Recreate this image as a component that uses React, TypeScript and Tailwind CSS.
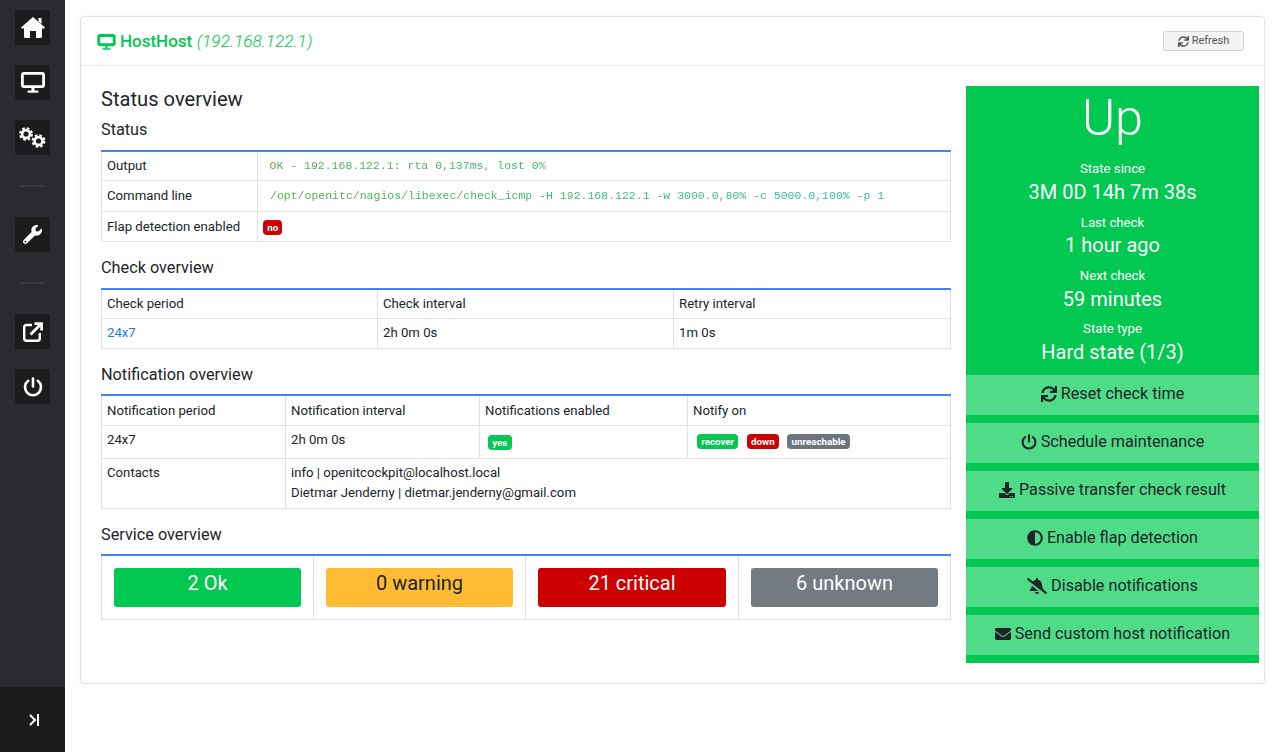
import React from "react";
import { FaWrench, FaSync, FaDownload, FaAdjust, FaBellSlash, FaEnvelope } from "react-icons/fa";

const HomeIcon = () => (
  <svg width="24" height="21" viewBox="0 0 24 21" fill="currentColor">
    <path d="M12 0 L24 10.5 Q24 11.5 23 11.5 H21 V19.5 Q21 21 19.5 21 H15 V14 H9 V21 H4.5 Q3 21 3 19.5 V11.5 H1 Q0 11.5 0 10.5 Z" />
    <path d="M17.5 1 H20.5 V7 L17.5 4.5 Z" />
  </svg>
);

const DesktopIcon = ({ width, height, stroke = 2.8 }: { width: number; height: number; stroke?: number }) => (
  <svg width={width} height={height} viewBox="0 0 24 21" fill="currentColor">
    <rect x={stroke / 2} y={stroke / 2} width={24 - stroke} height={16 - stroke} rx="1.6" fill="none" stroke="currentColor" strokeWidth={stroke} />
    <rect x="10.5" y="16" width="3" height="3" />
    <rect x="6.5" y="18.6" width="11" height="2.2" rx="0.8" />
  </svg>
);

const CogsIcon = () => (
  <svg width="27" height="21" viewBox="0 0 27 21" fill="none" stroke="currentColor">
    <circle cx="7" cy="7" r="3.9" strokeWidth="2.6" />
    <circle cx="7" cy="7" r="5.7" strokeWidth="2.4" strokeDasharray="2.5 2" />
    <circle cx="19.5" cy="14" r="3.9" strokeWidth="2.6" />
    <circle cx="19.5" cy="14" r="5.7" strokeWidth="2.4" strokeDasharray="2.5 2" />
  </svg>
);

const ExternalIcon = () => (
  <svg width="20" height="20" viewBox="0 0 20 20" fill="none" stroke="currentColor" strokeWidth="2.4">
    <path d="M9 3 H3.5 Q1.2 3 1.2 5.3 V16.2 Q1.2 18.8 3.5 18.8 H14.5 Q16.8 18.8 16.8 16.2 V11" />
    <path d="M7.5 12.5 L18 2" strokeWidth="2.8" />
    <path d="M11.5 1.6 H18.6 V8.5" strokeWidth="2.6" />
  </svg>
);

const PowerIcon = ({ size }: { size: number }) => (
  <svg width={size} height={size} viewBox="0 0 20 20" fill="none" stroke="currentColor" strokeWidth="2.6" strokeLinecap="round">
    <path d="M10 1.5 V9.5" />
    <path d="M5.2 3.8 A8 8 0 1 0 14.8 3.8" />
  </svg>
);

const IconBtn = ({ children }: { children: React.ReactNode }) => (
  <div className="w-[35px] h-[35px] rounded-[2px] bg-[#1c1c1f] flex items-center justify-center text-white">{children}</div>
);

const Cell = ({ className = "", colSpan, children }: { className?: string; colSpan?: number; children?: React.ReactNode }) => (
  <td colSpan={colSpan} className={"border border-[#dee2e6] pl-[5px] pr-[5px] align-top py-[4.5px] leading-[19.8px] " + className}>{children}</td>
);

const Badge = ({ color, children }: { color: string; children: React.ReactNode }) => (
  <span className={"inline-block align-middle rounded-[4px] text-white font-bold text-[9.75px] leading-[15px] px-[4.2px] " + color}>{children}</span>
);

const H5 = ({ className = "", children }: { className?: string; children: React.ReactNode }) => (
  <h5 className={"text-[16.25px] leading-[19.5px] text-[#212529] " + className}>{children}</h5>
);

const Action = ({ icon, children }: { icon: React.ReactNode; children: React.ReactNode }) => (
  <div className="h-[40px] bg-[#50db88] flex items-center justify-center gap-[4px] text-[16.2px] text-[#212529] pb-[1px]">
    {icon}
    <span>{children}</span>
  </div>
);

const Stat = ({ label, value }: { label: string; value: string }) => (
  <div className="text-center text-white">
    <div className="text-[13.2px] leading-[20px]">{label}</div>
    <div className="text-[20px] leading-[24px] mt-[0.6px]">{value}</div>
  </div>
);

const Tile = ({ color, text, children }: { color: string; text: string; children: React.ReactNode }) => (
  <td className="border border-[#dee2e6] px-[12.25px] pt-[12px] pb-[12px]">
    <div className={"h-[39px] rounded-[3px] text-center text-[20px] leading-[30px] " + color + " " + text}>{children}</div>
  </td>
);

const mono = { fontFamily: "'Liberation Mono', monospace" };

export default function App() {
  return (
    <div className="flex h-[752px] bg-white text-[13.2px] text-[#212529] overflow-hidden" style={{ fontFamily: "Roboto, sans-serif" }}>
      <aside className="w-[65px] shrink-0 flex flex-col bg-[#2a2a2f]">
        <div className="flex-1 flex flex-col items-center pt-[10px]">
          <IconBtn><HomeIcon /></IconBtn>
          <div className="h-[20px]" />
          <IconBtn><DesktopIcon width={24} height={21} /></IconBtn>
          <div className="h-[20px]" />
          <IconBtn><CogsIcon /></IconBtn>
          <div className="w-[25px] h-[2px] bg-[#38383d] mt-[30px] mb-[30px]" />
          <IconBtn><FaWrench size={19} /></IconBtn>
          <div className="w-[25px] h-[2px] bg-[#38383d] mt-[30px] mb-[30px]" />
          <IconBtn><ExternalIcon /></IconBtn>
          <div className="h-[20px]" />
          <IconBtn><PowerIcon size={20} /></IconBtn>
        </div>
        <div className="h-[65px] bg-[#1c1c1f] flex items-center justify-center text-white">
          <svg width="10" height="12" viewBox="0 0 10 12" className="ml-[3px]">
            <path d="M1 1l5 5-5 5" fill="none" stroke="currentColor" strokeWidth="2" />
            <rect x="8" y="0" width="2" height="12" fill="currentColor" />
          </svg>
        </div>
      </aside>
      <main className="flex-1 pl-[15px] pr-[15px] pt-[16px]">
        <div className="h-[668px] bg-white border border-[#dee2e6] rounded-[4px] shadow-[0_0_13px_rgba(0,0,0,0.04)]">
          <header className="h-[49px] border-b border-[#e9ebee] flex items-center justify-between pl-[16px] pr-[20px]">
            <div className="flex items-center text-[#00c851] text-[17px] pt-[1px]">
              <span className="mr-[4px] flex"><DesktopIcon width={19} height={16} stroke={3.8} /></span>
              <span className="font-medium">HostHost</span>
              <span className="ml-[4.5px] italic font-light text-[17.25px]">(192.168.122.1)</span>
            </div>
            <div className="w-[81px] h-[20px] rounded-[3px] border border-[#d4d4d4] bg-[#f4f4f4] flex items-center justify-center gap-[3px] text-[11px] text-[#555]">
              <FaSync size={11} />
              <span>Refresh</span>
            </div>
          </header>
          <div className="flex pt-[20px] pl-[20px] pr-[5px]">
            <div className="w-[850px] pt-[3px]">
              <h4 className="text-[20.15px] leading-[21px]">Status overview</h4>
              <H5 className="mt-[10px]">Status</H5>
              <table className="w-full mt-[10px] border-t-[2px] border-t-[#4285f4] border-collapse table-fixed">
                <colgroup><col className="w-[156px]" /><col /></colgroup>
                <tbody>
                  <tr className="h-[30px]"><Cell>Output</Cell><Cell className="pl-[11.5px]"><code className="block pt-[1px] leading-[18.8px] text-[11.5px] bg-linear-to-r from-[#4cae3c] to-[#1db9aa] bg-clip-text text-transparent" style={mono}>OK - 192.168.122.1: rta 0,137ms, lost 0%</code></Cell></tr>
                  <tr className="h-[31px]"><Cell>Command line</Cell><Cell className="pl-[12px]"><code className="block pt-[1px] leading-[18.8px] text-[11.5px] bg-linear-to-r from-[#4cae3c] to-[#1db9aa] bg-clip-text text-transparent" style={mono}>/opt/openitc/nagios/libexec/check_icmp -H 192.168.122.1 -w 3000.0,80% -c 5000.0,100% -p 1</code></Cell></tr>
                  <tr className="h-[30px]"><Cell>Flap detection enabled</Cell><Cell className="!align-middle !py-0"><Badge color="bg-[#cc0000]">no</Badge></Cell></tr>
                </tbody>
              </table>
              <H5 className="mt-[16px]">Check overview</H5>
              <table className="w-full mt-[10px] border-t-[2px] border-t-[#4285f4] border-collapse table-fixed">
                <colgroup><col className="w-[276px]" /><col className="w-[296px]" /><col /></colgroup>
                <tbody>
                  <tr className="h-[29px]"><Cell className="!py-[4px]">Check period</Cell><Cell className="!py-[4px]">Check interval</Cell><Cell className="!py-[4px]">Retry interval</Cell></tr>
                  <tr className="h-[30px]"><Cell className="text-[#1e7be0]">24x7</Cell><Cell>2h 0m 0s</Cell><Cell>1m 0s</Cell></tr>
                </tbody>
              </table>
              <H5 className="mt-[16px]">Notification overview</H5>
              <table className="w-full mt-[10px] border-t-[2px] border-t-[#4285f4] border-collapse table-fixed">
                <colgroup><col className="w-[184px]" /><col className="w-[194px]" /><col className="w-[208px]" /><col /></colgroup>
                <tbody>
                  <tr className="h-[30px]"><Cell>Notification period</Cell><Cell>Notification interval</Cell><Cell>Notifications enabled</Cell><Cell>Notify on</Cell></tr>
                  <tr className="h-[33px]"><Cell>24x7</Cell><Cell>2h 0m 0s</Cell>
                    <Cell className="!pl-[8px] !align-middle !py-0"><Badge color="bg-[#00c851]">yes</Badge></Cell>
                    <Cell className="!pl-[9px] !align-middle !py-0"><span className="flex gap-[8.5px]"><Badge color="bg-[#00c851]">recover</Badge><Badge color="bg-[#cc0000]">down</Badge><Badge color="bg-[#6c757d]">unreachable</Badge></span></Cell></tr>
                  <tr className="h-[50px]"><Cell>Contacts</Cell><Cell colSpan={3}>info | openitcockpit@localhost.local<br />Dietmar Jenderny | dietmar.jenderny@gmail.com</Cell></tr>
                </tbody>
              </table>
              <H5 className="mt-[16px]">Service overview</H5>
              <table className="w-full mt-[10px] border-t-[2px] border-t-[#4285f4] border-collapse table-fixed">
                <colgroup><col className="w-[212px]" /><col className="w-[212px]" /><col className="w-[213px]" /><col /></colgroup>
                <tbody>
                  <tr>
                    <Tile color="bg-[#00c851]" text="text-white">2 Ok</Tile>
                    <Tile color="bg-[#ffbb33]" text="text-[#212529]">0 warning</Tile>
                    <Tile color="bg-[#cc0000]" text="text-white">21 critical</Tile>
                    <Tile color="bg-[#737a82]" text="text-white">6 unknown</Tile>
                  </tr>
                </tbody>
              </table>
            </div>
            <div className="w-[293px] ml-[15px] bg-[#00c851] pb-[8px]">
              <div className="text-center text-white text-[50.5px] leading-[58px] font-light pt-[3px] pb-[12.2px]">Up</div>
              <div className="flex flex-col gap-[8.8px] pb-[11px]">
                <Stat label="State since" value="3M 0D 14h 7m 38s" />
                <Stat label="Last check" value="1 hour ago" />
                <Stat label="Next check" value="59 minutes" />
                <Stat label="State type" value="Hard state (1/3)" />
              </div>
              <div className="flex flex-col gap-[8px]">
                <Action icon={<FaSync size={16} />}>Reset check time</Action>
                <Action icon={<PowerIcon size={16} />}>Schedule maintenance</Action>
                <Action icon={<FaDownload size={16} />}>Passive transfer check result</Action>
                <Action icon={<FaAdjust size={16} />}>Enable flap detection</Action>
                <Action icon={<FaBellSlash size={20} />}>Disable notifications</Action>
                <Action icon={<FaEnvelope size={16} />}>Send custom host notification</Action>
              </div>
            </div>
          </div>
        </div>
      </main>
    </div>
  );
}
